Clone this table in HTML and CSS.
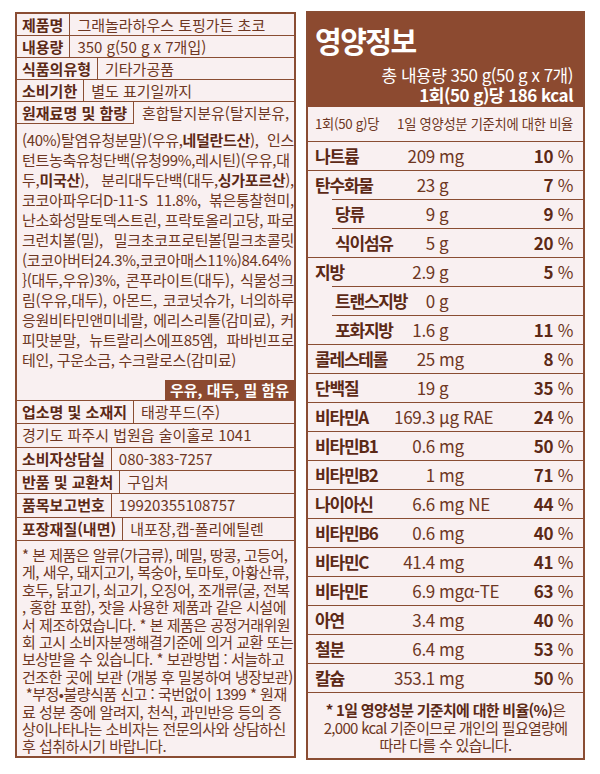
FILE: index.html
```html
<!DOCTYPE html>
<html lang="ko">
<head>
<meta charset="utf-8">
<title>그래놀라하우스 토핑가든 초코</title>
<link rel="stylesheet" href="styles.css">
</head>
<body>
<div class="page">
  <section class="info">
    <div class="row"><div class="lbl">제품명</div><div class="val">그래놀라하우스 토핑가든 초코</div></div>
    <div class="row"><div class="lbl">내용량</div><div class="val">350 g(50 g x 7개입)</div></div>
    <div class="row"><div class="lbl">식품의유형</div><div class="val">기타가공품</div></div>
    <div class="row"><div class="lbl">소비기한</div><div class="val">별도 표기일까지</div></div>
    <div class="ingr">
      <div class="ingr-head"><div class="lbl lbl-box">원재료명 및 함량</div><div class="val">혼합탈지분유(탈지분유,</div></div>
      <div class="ingr-body">
        <span class="jl">(40%)탈염유청분말)(우유,<b>네덜란드산</b>), 인스</span>
        <span class="jl">턴트농축유청단백(유청99%,레시틴)(우유,대</span>
        <span class="jl">두,<b>미국산</b>), 분리대두단백(대두,<b>싱가포르산</b>),</span>
        <span class="jl">코코아파우더D-11-S 11.8%, 볶은통찰현미,</span>
        <span class="jl">난소화성말토덱스트린, 프락토올리고당, 파로</span>
        <span class="jl">크런치볼(밀), 밀크초코프로틴볼{밀크초콜릿</span>
        <span class="jl">(코코아버터24.3%,코코아매스11%)84.64%</span>
        <span class="jl">}(대두,우유)3%, 콘푸라이트(대두), 식물성크</span>
        <span class="jl">림(우유,대두), 아몬드, 코코넛슈가, 너의하루</span>
        <span class="jl">응원비타민앤미네랄, 에리스리톨(감미료), 커</span>
        <span class="jl">피맛분말, 뉴트랄리스에프85엠, 파바빈프로</span>
        <span class="ll">테인, 구운소금, 수크랄로스(감미료)</span>
      </div>
      <div class="allergy"><span class="badge">우유, 대두, 밀 함유</span></div>
    </div>
    <div class="row tall"><div class="lbl">업소명 및 소재지</div><div class="val">태광푸드(주)</div></div>
    <div class="row tall"><div class="val full">경기도 파주시 법원읍 술이홀로 1041</div></div>
    <div class="row tall"><div class="lbl">소비자상담실</div><div class="val">080-383-7257</div></div>
    <div class="row tall"><div class="lbl">반품 및 교환처</div><div class="val">구입처</div></div>
    <div class="row tall"><div class="lbl">품목보고번호</div><div class="val">19920355108757</div></div>
    <div class="row tall"><div class="lbl">포장재질(내면)</div><div class="val">내포장,캡-폴리에틸렌</div></div>
    <div class="notes">
      <span class="nl">* 본 제품은 알류(가금류), 메밀, 땅콩, 고등어,</span>
      <span class="nl">게, 새우, 돼지고기, 복숭아, 토마토, 아황산류,</span>
      <span class="nl">호두, 닭고기, 쇠고기, 오징어, 조개류(굴, 전복</span>
      <span class="nl">, 홍합 포함), 잣을 사용한 제품과 같은 시설에</span>
      <span class="nl">서 제조하였습니다. * 본 제품은 공정거래위원</span>
      <span class="nl">회 고시 소비자분쟁해결기준에 의거 교환 또는</span>
      <span class="nl">보상받을 수 있습니다. * 보관방법 : 서늘하고</span>
      <span class="nl">건조한 곳에 보관 (개봉 후 밀봉하여 냉장보관)</span>
      <span class="nl">&nbsp;*부정•불량식품 신고 : 국번없이 1399 * 원재</span>
      <span class="nl">료 성분 중에 알려지, 천식, 과민반응 등의 증</span>
      <span class="nl">상이나타나는 소비자는 전문의사와 상담하신</span>
      <span class="nl">후 섭취하시기 바랍니다.</span>
    </div>
  </section>

  <section class="nutri">
    <header class="nh">
      <h1 class="nh-title">영양정보</h1>
      <p class="nh-line">총 내용량 350 g(50 g x 7개)</p>
      <p class="nh-line nh-kcal">1회(50 g)당 186 kcal</p>
    </header>
    <div class="colh"><span>1회(50 g)당</span><span>1일 영양성분 기준치에 대한 비율</span></div>
    <div class="nr"><span class="nm">나트륨</span><span class="num">209</span><span class="unit">mg</span><span class="pct"><b>10</b> %</span></div>
    <div class="nr"><span class="nm">탄수화물</span><span class="num">23</span><span class="unit">g</span><span class="pct"><b>7</b> %</span></div>
    <div class="nr sub"><span class="nm">당류</span><span class="num">9</span><span class="unit">g</span><span class="pct"><b>9</b> %</span></div>
    <div class="nr sub"><span class="nm">식이섬유</span><span class="num">5</span><span class="unit">g</span><span class="pct"><b>20</b> %</span></div>
    <div class="nr"><span class="nm">지방</span><span class="num">2.9</span><span class="unit">g</span><span class="pct"><b>5</b> %</span></div>
    <div class="nr sub"><span class="nm">트랜스지방</span><span class="num">0</span><span class="unit">g</span><span class="pct"></span></div>
    <div class="nr sub"><span class="nm">포화지방</span><span class="num">1.6</span><span class="unit">g</span><span class="pct"><b>11</b> %</span></div>
    <div class="nr"><span class="nm">콜레스테롤</span><span class="num">25</span><span class="unit">mg</span><span class="pct"><b>8</b> %</span></div>
    <div class="nr"><span class="nm">단백질</span><span class="num">19</span><span class="unit">g</span><span class="pct"><b>35</b> %</span></div>
    <div class="nr"><span class="nm">비타민A</span><span class="num">169.3</span><span class="unit">μg RAE</span><span class="pct"><b>24</b> %</span></div>
    <div class="nr"><span class="nm">비타민B1</span><span class="num">0.6</span><span class="unit">mg</span><span class="pct"><b>50</b> %</span></div>
    <div class="nr"><span class="nm">비타민B2</span><span class="num">1</span><span class="unit">mg</span><span class="pct"><b>71</b> %</span></div>
    <div class="nr"><span class="nm">나이아신</span><span class="num">6.6</span><span class="unit">mg NE</span><span class="pct"><b>44</b> %</span></div>
    <div class="nr"><span class="nm">비타민B6</span><span class="num">0.6</span><span class="unit">mg</span><span class="pct"><b>40</b> %</span></div>
    <div class="nr"><span class="nm">비타민C</span><span class="num">41.4</span><span class="unit">mg</span><span class="pct"><b>41</b> %</span></div>
    <div class="nr"><span class="nm">비타민E</span><span class="num">6.9</span><span class="unit">mgα-TE</span><span class="pct"><b>63</b> %</span></div>
    <div class="nr"><span class="nm">아연</span><span class="num">3.4</span><span class="unit">mg</span><span class="pct"><b>40</b> %</span></div>
    <div class="nr"><span class="nm">철분</span><span class="num">6.4</span><span class="unit">mg</span><span class="pct"><b>53</b> %</span></div>
    <div class="nr"><span class="nm">칼슘</span><span class="num">353.1</span><span class="unit">mg</span><span class="pct"><b>50</b> %</span></div>
    <div class="foot">
      <p><b>* 1일 영양성분 기준치에 대한 비율(%)</b>은</p>
      <p>2,000 kcal 기준이므로 개인의 필요열량에</p>
      <p>따라 다를 수 있습니다.</p>
    </div>
  </section>
</div>
</body>
</html>
```

FILE: styles.css
```css
* {
  box-sizing: border-box;
  margin: 0;
  padding: 0;
}

body {
  background: #ffffff;
  font-family: "Noto Sans CJK KR", "Noto Sans", sans-serif;
  color: #6e3723;
  font-size: 15px;
}

b {
  font-weight: 700;
  color: #5c2916;
}

.page {
  display: flex;
  align-items: flex-start;
  gap: 10px;
  padding: 11px 0 0 15px;
}

/* ---------- left information panel ---------- */
.info {
  width: 281px;
  margin-top: 1px;
  border: 2px solid #8a4d33;
  background: #f9f0f1;
}

.row {
  display: flex;
  height: 22px;
  line-height: 21px;
  border-bottom: 1px solid #8a4d33;
}

.row.tall {
  height: 23.33px;
  line-height: 22px;
}

.lbl {
  font-weight: 700;
  color: #5c2916;
  padding: 0 6px 0 5px;
  border-right: 1px solid #8a4d33;
  white-space: nowrap;
}

.val {
  padding-left: 7px;
  white-space: nowrap;
}

.val.full {
  padding-left: 5px;
}

.ingr {
  border-bottom: 1px solid #8a4d33;
}

.ingr-head {
  display: flex;
  height: 22px;
  line-height: 21px;
}

.lbl-box {
  border-bottom: 1px solid #8a4d33;
}

.ingr-head .val {
  padding-left: 8px;
}

.ingr-body {
  padding: 6px 0 0 5px;
  line-height: 20px;
  letter-spacing: -0.3px;
}

.jl {
  display: block;
  white-space: nowrap;
  text-align: justify;
  text-align-last: justify;
}

.ll {
  display: block;
  white-space: nowrap;
}

.allergy {
  display: flex;
  justify-content: flex-end;
  margin-top: 10px;
}

.badge {
  width: 129px;
  text-align: center;
  background: #8c4a30;
  color: #ffffff;
  font-weight: 700;
  line-height: 20px;
}

.notes {
  padding: 5px 2px 1px 5px;
  line-height: 17.4px;
  letter-spacing: -0.5px;
}

.nl {
  display: block;
  white-space: nowrap;
}

/* ---------- right nutrition panel ---------- */
.nutri {
  width: 279px;
  border: 2px solid #8a4d33;
  background: #f9f0f1;
}

.nh {
  background: #8c4a30;
  color: #ffffff;
  padding: 10px 10px 2px 7px;
}

.nh-title {
  font-size: 29px;
  line-height: 34px;
  font-weight: 700;
  letter-spacing: -1.5px;
  margin-bottom: 8px;
}

.nh-line {
  text-align: right;
  font-size: 17px;
  line-height: 20px;
  letter-spacing: -0.5px;
}

.nh-kcal {
  font-weight: 700;
}

.colh {
  display: flex;
  justify-content: space-between;
  height: 34px;
  line-height: 34px;
  padding: 0 10px 0 7px;
  font-size: 13.3px;
  letter-spacing: -0.3px;
}

.nr {
  display: flex;
  height: 29px;
  line-height: 28px;
  border-top: 1px solid #8a4d33;
  padding: 0 10px 0 7px;
  font-size: 17px;
  white-space: nowrap;
}

.nr.sub {
  margin-left: 24px;
  padding-left: 3px;
}

.nm {
  width: 60px;
  font-weight: 700;
  color: #5c2916;
  letter-spacing: -1.2px;
}

.nr.sub .nm {
  width: 40px;
}

.num {
  width: 60px;
  text-align: right;
  letter-spacing: -0.3px;
}

.unit {
  padding-left: 4px;
  letter-spacing: -0.3px;
}

.pct {
  margin-left: auto;
  letter-spacing: -0.3px;
}

.foot {
  border-top: 1px solid #8a4d33;
  padding: 8px 4px 4px;
  text-align: center;
  font-size: 15px;
  line-height: 17.5px;
  letter-spacing: -0.7px;
}
```
